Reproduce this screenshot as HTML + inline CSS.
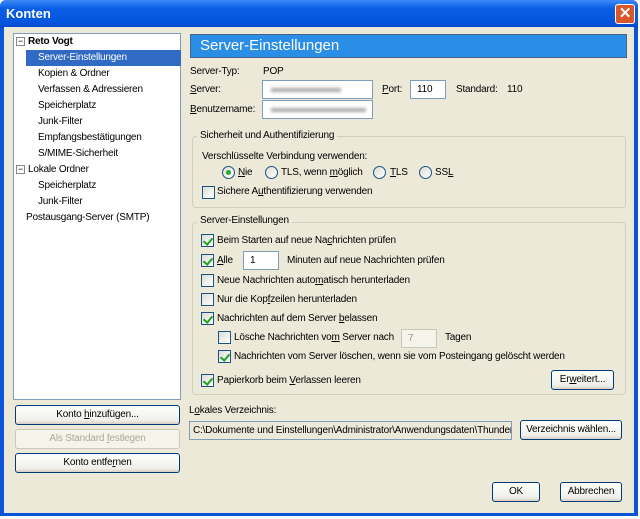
<!DOCTYPE html>
<html><head><meta charset="utf-8"><style>
*{box-sizing:border-box;margin:0;padding:0}
body{width:640px;height:519px;background:#fff;font-family:"Liberation Sans",sans-serif;font-size:10px;letter-spacing:-0.2px;color:#000;position:relative;overflow:hidden}
.win{position:absolute;left:0;top:0;width:638px;height:516px;background:#0a54d8;border-radius:6px 6px 0 0}
.body{position:absolute;left:4px;top:27px;width:630px;height:486px;background:#ece9d8}
.title{position:absolute;left:6px;top:6px;color:#fff;font-weight:bold;font-size:13px;letter-spacing:0}
.tb{position:absolute;left:0;top:0;width:638px;height:28px;border-radius:6px 6px 0 0;background:linear-gradient(#3d8af7,#0a5fe6 30%,#0554dd 80%,#0348c8)}
.close{position:absolute;left:615px;top:4px;width:20px;height:20px;border:1px solid #fff;border-radius:3px;background:#d9572c;color:#fff;font-size:15px;font-weight:bold;text-align:center;line-height:18px}
.a{position:absolute;white-space:nowrap}
.tree{position:absolute;left:13px;top:33px;width:168px;height:367px;background:#fff;border:1px solid #7f9db9}
.row{position:absolute;height:16px;line-height:16px;white-space:nowrap}
.sel{background:#316ac5;color:#fff}
.hdr{position:absolute;left:190px;top:34px;width:437px;height:24px;background:#2a8de6;border:1px solid #48638b;color:#fff;font-size:15px;letter-spacing:0;padding-left:9px;line-height:22px}
.inp{position:absolute;background:#fff;border:1px solid #7f9db9;height:19px;padding-left:6px;line-height:17px;white-space:nowrap;overflow:hidden}
.blur{position:absolute;top:7px;height:4px;background:#aaa;filter:blur(1.5px)}
.grp{position:absolute;border:1px solid #d0d0bf;border-radius:4px}
.leg{position:absolute;background:#ece9d8;padding:0 3px;white-space:nowrap}
.cb{position:absolute;width:13px;height:13px;border:1px solid #1c5180;background:linear-gradient(135deg,#dcdcd4,#fff)}
.cb.on::after{content:"";position:absolute;left:3px;top:1px;width:4px;height:7px;border:solid #21a121;border-width:0 2px 2px 0;transform:rotate(40deg)}
.rb{position:absolute;width:13px;height:13px;border:1px solid #1c5180;border-radius:50%;background:linear-gradient(135deg,#dcdcd4,#fff)}
.rb.on::after{content:"";position:absolute;left:3px;top:3px;width:5px;height:5px;border-radius:50%;background:#2fa82f}
.btn{position:absolute;border:1px solid #003c74;border-radius:3px;background:linear-gradient(#fff,#f0f0ea 80%,#d6d0c5);text-align:center;line-height:18px;white-space:nowrap}
.dis{border-color:#c9c7ba;color:#aca899;background:#f5f4ea}
u{text-decoration:underline}
</style></head><body>
<div class="win"><div class="tb"></div><div class="title">Konten</div><div class="close">✕</div>
<div class="body"></div></div>

<div class="tree">
<div class="row" style="left:2px;top:0;font-weight:bold"><span style="display:inline-block;width:9px;height:9px;border:1px solid #888;font-size:9px;line-height:6px;text-align:center;font-weight:normal;margin-right:3px">−</span>Reto Vogt</div>
<div class="row sel" style="left:12px;top:16px;width:155px;padding-left:12px">Server-Einstellungen</div>
<div class="row" style="left:24px;top:32px">Kopien &amp; Ordner</div>
<div class="row" style="left:24px;top:48px">Verfassen &amp; Adressieren</div>
<div class="row" style="left:24px;top:64px">Speicherplatz</div>
<div class="row" style="left:24px;top:80px">Junk-Filter</div>
<div class="row" style="left:24px;top:96px">Empfangsbestätigungen</div>
<div class="row" style="left:24px;top:112px">S/MIME-Sicherheit</div>
<div class="row" style="left:2px;top:128px"><span style="display:inline-block;width:9px;height:9px;border:1px solid #888;font-size:9px;line-height:6px;text-align:center;margin-right:3px">−</span>Lokale Ordner</div>
<div class="row" style="left:24px;top:144px">Speicherplatz</div>
<div class="row" style="left:24px;top:160px">Junk-Filter</div>
<div class="row" style="left:12px;top:176px">Postausgang-Server (SMTP)</div>
</div>

<div class="btn" style="left:15px;top:405px;width:165px;height:20px">Konto <u>h</u>inzufügen...</div>
<div class="btn dis" style="left:15px;top:429px;width:165px;height:20px">Als Standard <u>f</u>estlegen</div>
<div class="btn" style="left:15px;top:453px;width:165px;height:20px">Konto entfe<u>r</u>nen</div>

<div class="hdr">Server-Einstellungen</div>
<div class="a" style="left:190px;top:66px">Server-Typ:</div>
<div class="a" style="left:263px;top:66px">POP</div>
<div class="a" style="left:190px;top:84px"><u>S</u>erver:</div>
<div class="inp" style="left:262px;top:80px;width:111px"><div class="blur" style="left:8px;width:70px"></div></div>
<div class="a" style="left:382px;top:84px"><u>P</u>ort:</div>
<div class="inp" style="left:410px;top:80px;width:36px">110</div>
<div class="a" style="left:456px;top:84px">Standard:</div>
<div class="a" style="left:507px;top:84px">110</div>
<div class="a" style="left:190px;top:104px"><u>B</u>enutzername:</div>
<div class="inp" style="left:262px;top:100px;width:111px"><div class="blur" style="left:8px;width:95px"></div></div>

<div class="grp" style="left:192px;top:136px;width:434px;height:72px"></div>
<div class="leg" style="left:197px;top:130px">Sicherheit und Authentifizierung</div>
<div class="a" style="left:202px;top:151px">Verschlüsselte Verbindung verwenden:</div>
<div class="rb on" style="left:222px;top:166px"></div><div class="a" style="left:238px;top:167px"><u>N</u>ie</div>
<div class="rb" style="left:265px;top:166px"></div><div class="a" style="left:281px;top:167px">TLS, wenn <u>m</u>öglich</div>
<div class="rb" style="left:373px;top:166px"></div><div class="a" style="left:390px;top:167px"><u>T</u>LS</div>
<div class="rb" style="left:419px;top:166px"></div><div class="a" style="left:435px;top:167px">SS<u>L</u></div>
<div class="cb" style="left:202px;top:186px"></div><div class="a" style="left:217px;top:186px">Sichere A<u>u</u>thentifizierung verwenden</div>

<div class="grp" style="left:192px;top:222px;width:434px;height:173px"></div>
<div class="leg" style="left:197px;top:215px">Server-Einstellungen</div>
<div class="cb on" style="left:201px;top:234px"></div><div class="a" style="left:217px;top:235px">Beim Starten auf neue Na<u>c</u>hrichten prüfen</div>
<div class="cb on" style="left:201px;top:254px"></div><div class="a" style="left:217px;top:255px"><u>A</u>lle</div>
<div class="inp" style="left:243px;top:251px;width:36px">1</div>
<div class="a" style="left:287px;top:255px">Minuten auf neue Nachrichten prüfen</div>
<div class="cb" style="left:201px;top:274px"></div><div class="a" style="left:217px;top:275px">Neue Nachrichten auto<u>m</u>atisch herunterladen</div>
<div class="cb" style="left:201px;top:293px"></div><div class="a" style="left:217px;top:294px">Nur die Kop<u>f</u>zeilen herunterladen</div>
<div class="cb on" style="left:201px;top:312px"></div><div class="a" style="left:217px;top:313px">Nachrichten auf dem Server <u>b</u>elassen</div>
<div class="cb" style="left:218px;top:331px"></div><div class="a" style="left:234px;top:332px">Lösche Nachrichten vo<u>m</u> Server nach</div>
<div class="inp" style="left:401px;top:329px;width:36px;background:#f5f4ea;color:#999;border-color:#c9c7ba">7</div>
<div class="a" style="left:445px;top:332px">Tagen</div>
<div class="cb on" style="left:218px;top:350px"></div><div class="a" style="left:234px;top:351px">Nachrichten vom Server löschen, wenn sie vom Posteingang gelöscht werden</div>
<div class="cb on" style="left:201px;top:374px"></div><div class="a" style="left:217px;top:375px">Papierkorb beim <u>V</u>erlassen leeren</div>
<div class="btn" style="left:551px;top:370px;width:63px;height:20px">Er<u>w</u>eitert...</div>

<div class="a" style="left:189px;top:405px">L<u>o</u>kales Verzeichnis:</div>
<div class="inp" style="left:189px;top:421px;width:323px;background:#ece9d8;padding-left:3px">C:\Dokumente und Einstellungen\Administrator\Anwendungsdaten\Thunderbird</div>
<div class="btn" style="left:520px;top:420px;width:102px;height:20px">Verzeichnis wählen...</div>

<div class="btn" style="left:492px;top:482px;width:48px;height:20px">OK</div>
<div class="btn" style="left:560px;top:482px;width:62px;height:20px">Abbrechen</div>
</body></html>
